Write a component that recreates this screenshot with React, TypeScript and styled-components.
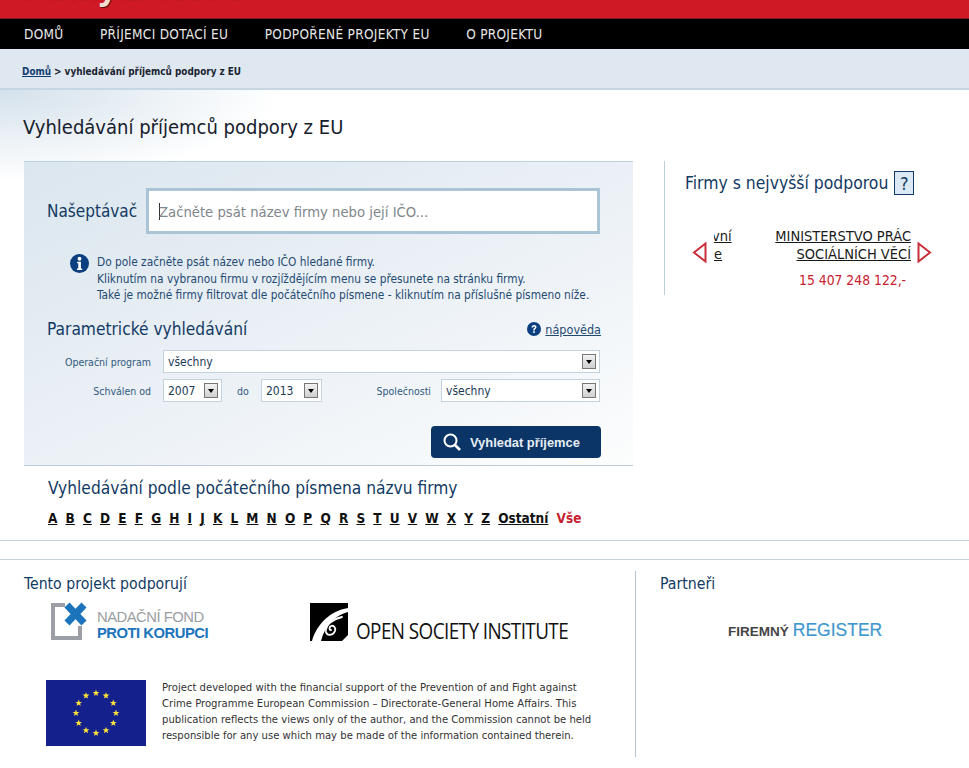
import { createGlobalStyle, styled } from 'styled-components'

const GlobalStyle = createGlobalStyle`
  html, body { margin: 0; padding: 0; background: #fff; }
  body { font-family: 'DejaVu Sans Condensed', 'DejaVu Sans', sans-serif; font-stretch: condensed; color: #0f2f55; overflow: hidden; }
  * { box-sizing: border-box; }
`

const Page = styled.div`
  width: 969px;
  height: 768px;
  overflow: hidden;
`

const Brand = styled.div`
  height: 19px;
  background: #cf1a26;
  border-bottom: 1px solid #7d1a20;
  overflow: hidden;
  padding-left: 24px;
`

const BrandName = styled.div`
  margin-top: -29px;
  font: bold 32px/32px 'Noto Sans', sans-serif;
  letter-spacing: 0.5px;
  color: #f1dcd2;
  text-shadow: 1px 1px 1px #4b1015;
`

const Nav = styled.nav`
  height: 30px;
  background: #000;
  display: flex;
  align-items: center;
  padding-left: 24px;
  gap: 36.5px;
`

const NavItem = styled.a`
  font-size: 13.5px;
  letter-spacing: 0.3px;
  color: #e8e8e8;
`

const Crumbs = styled.div`
  height: 41px;
  background: #dfe8f0;
  border-bottom: 2px solid #c6d6e2;
  display: flex;
  align-items: center;
  padding: 6px 0 0 22px;
  font-size: 9.9px;
  font-weight: 700;
  color: #1a2430;
`

const CrumbLink = styled.a`
  color: #0f3d70;
  text-decoration: underline;
  margin-right: 3px;
`

const Main = styled.main`
  height: 451px;
  padding-left: 24px;
  background: radial-gradient(ellipse 280px 90px at 0 0, #d4e1eb 0%, #fff 100%) no-repeat;
  border-bottom: 1px solid #c3d2dc;
`

const PageTitle = styled.h1`
  margin: 0 0 0 -1px;
  padding-top: 22px;
  height: 71px;
  font-size: 20px;
  line-height: 30px;
  font-weight: 400;
  color: #16202c;
`

const Columns = styled.div`
  display: flex;
`

const SearchColumn = styled.section`
  width: 609px;
`

const SearchPanel = styled.div`
  height: 305px;
  border-top: 1px solid #bcd2e0;
  border-bottom: 1px solid #bccbd5;
  background: linear-gradient(155deg, #dbe6ee 0%, #edf2f7 58%, #fcfdfd 100%);
  padding: 26px 32px 0 23px;
`

const SuggestRow = styled.div`
  display: flex;
  align-items: center;
`

const SuggestLabel = styled.label`
  width: 99px;
  font-size: 17px;
  color: #123a63;
`

const SuggestInput = styled.div`
  width: 454px;
  height: 46px;
  background: #fff;
  border: 3px solid #aac4d6;
  display: flex;
  align-items: center;
  padding-left: 10px;
  font-size: 14.7px;
  color: #80868c;
`

const Caret = styled.span`
  width: 1px;
  height: 17px;
  background: #333;
  margin-right: -1px;
`

const Help = styled.div`
  display: flex;
  gap: 8px;
  margin: 20px 0 0 23px;
  font-size: 11.8px;
  line-height: 16.5px;
  color: #1f4a72;
  white-space: nowrap;
`

const ParamHead = styled.div`
  display: flex;
  justify-content: space-between;
  align-items: center;
  margin-top: 13.5px;
  height: 24px;
`

const ParamTitle = styled.h2`
  margin: 0;
  font-size: 17.2px;
  font-weight: 400;
  color: #123a63;
`

const HelpLink = styled.a`
  display: flex;
  align-items: center;
  gap: 4px;
  font-size: 12.5px;
  color: #1f4a72;
  text-decoration: underline;
`

const FormRow = styled.div<{ $first?: boolean }>`
  display: flex;
  align-items: center;
  height: 23px;
  margin-top: ${(p) => (p.$first ? 9 : 6)}px;
  font-size: 10.5px;
  color: #335a7d;
`

const FieldLabel = styled.span<{ $w: number; $l?: number; $r?: number }>`
  width: ${(p) => p.$w}px;
  margin-left: ${(p) => p.$l ?? 0}px;
  margin-right: ${(p) => p.$r ?? 12}px;
  text-align: right;
  white-space: nowrap;
`

const Select = styled.div<{ $w: number }>`
  width: ${(p) => p.$w}px;
  height: 23px;
  background: #fff;
  border: 1px solid #c4d3dd;
  display: flex;
  align-items: center;
  justify-content: space-between;
  padding: 0 3px 0 4px;
  font-size: 12px;
  color: #1c3a55;
`

const SelectArrow = styled.span`
  width: 14px;
  height: 15px;
  background: linear-gradient(#f2f2f2, #cfcfcf);
  border: 1px solid #777;
  display: flex;
  align-items: center;
  justify-content: center;
  &::after {
    content: '';
    border-left: 3px solid transparent;
    border-right: 3px solid transparent;
    border-top: 4px solid #000;
  }
`

const Actions = styled.div`
  display: flex;
  justify-content: flex-end;
  margin-top: 24px;
`

const SearchButton = styled.button`
  width: 170px;
  height: 32px;
  border: 0;
  border-radius: 4px;
  background: #0b3567;
  color: #e6edf4;
  display: flex;
  align-items: center;
  padding: 0 0 0 11px;
  gap: 8px;
  font: 700 12.9px 'Liberation Sans', Arial, sans-serif;
`

const AlphaTitle = styled.h2`
  margin: 10px 0 0 24px;
  font-size: 17.2px;
  line-height: 24px;
  font-weight: 400;
  color: #123a63;
`

const Letters = styled.div`
  margin: 10px 0 0 24px;
  display: flex;
  font-size: 13.5px;
  line-height: 16px;
  font-weight: 700;
  gap: 8.15px;
`

const Letter = styled.a<{ $active?: boolean }>`
  color: ${(p) => (p.$active ? '#c8202f' : '#111')};
  text-decoration: ${(p) => (p.$active ? 'none' : 'underline')};
`

const Aside = styled.aside`
  margin-left: 31px;
  width: 304px;
  height: 134px;
  border-left: 1px solid #bccfdc;
  padding: 10px 0 0 20px;
`

const AsideTitle = styled.h2`
  margin: 0;
  display: flex;
  align-items: center;
  gap: 6px;
  font-size: 17.4px;
  font-weight: 400;
  color: #123a63;
`

const HelpBox = styled.span`
  width: 20px;
  height: 24px;
  border: 1px solid #123a63;
  background: #dbe9f4;
  display: flex;
  align-items: center;
  justify-content: center;
  font-size: 18px;
`

const Carousel = styled.div`
  margin: 32px 0 0 7px;
  display: flex;
  align-items: flex-end;
  height: 36px;
`

const Slides = styled.div`
  width: 197px;
  margin: 0 6px 0 7px;
  overflow: hidden;
  display: flex;
  justify-content: space-between;
  font-size: 14.5px;
  line-height: 18px;
  color: #1a1a1a;
  white-space: nowrap;
`

const SlideLink = styled.a`
  text-decoration: underline;
`

const ClippedSlide = styled(SlideLink)`
  text-indent: -2px;
`

const SlideLinkRight = styled(SlideLink)`
  text-align: right;
`

const Amount = styled.div`
  margin: 9px 0 0 114px;
  font-size: 13.8px;
  color: #c8202f;
`

const Footer = styled.footer`
  margin-top: 18px;
  border-top: 1px solid #c3d2dc;
  display: flex;
  padding: 11px 0 0 24px;
`

const Supporters = styled.div`
  width: 611px;
`

const FooterTitle = styled.h3`
  margin: 1px 0 0;
  font-size: 15.7px;
  line-height: 24px;
  font-weight: 400;
  color: #123a63;
`

const Logos = styled.div`
  display: flex;
  margin: 6px 0 0 27px;
  height: 78px;
`

const AntiCorruption = styled.div`
  display: flex;
  gap: 9px;
  width: 259px;
`

const FundText = styled.div`
  padding-top: 7px;
  font: 400 14.8px/16px 'Liberation Sans', sans-serif;
  color: #9a9ea3;
  letter-spacing: -0.5px;
`

const FundStrong = styled.div`
  font-weight: 700;
  color: #1c75bc;
`

const OsiLogo = styled.div`
  display: flex;
  align-items: flex-end;
  gap: 8px;
  height: 39px;
`

const OsiName = styled.span`
  font: 400 22.5px/20px 'Open Sans', sans-serif;
  color: #111;
  letter-spacing: -0.7px;
  white-space: nowrap;
  transform: scaleX(0.84);
  transform-origin: left bottom;
`

const EuRow = styled.div`
  display: flex;
  gap: 16px;
  margin-left: 22px;
`

const EuText = styled.p`
  margin: 0;
  font-size: 11.2px;
  line-height: 16px;
  color: #333;
  white-space: nowrap;
`

const Partners = styled.div`
  width: 309px;
  height: 186px;
  border-left: 1px solid #b5c4cf;
  padding-left: 24px;
`

const PartnerLogo = styled.div`
  margin: 24px 0 0 68px;
  display: flex;
  align-items: baseline;
  gap: 4px;
  font: 700 13.5px 'Liberation Sans', sans-serif;
  color: #444;
`

const PartnerStrong = styled.span`
  font-size: 17.5px;
  font-weight: 400;
  -webkit-text-stroke: 0.2px #3f97cf;
  color: #3f97cf;
`

const Glyph = styled.svg`
  flex: none;
`

const letters = 'ABCDEFGHIJKLMNOPQRSTUVWXYZ'.split('')

const InfoIcon = () => (
  <Glyph width="19" height="19" viewBox="0 0 20 20">
    <circle cx="10" cy="10" r="10" fill="#0b3f80" />
    <circle cx="10" cy="5" r="2" fill="#fff" />
    <path d="M7.5 8.2h4v7h1.3v1.6H7.3v-1.6h1.4V9.8H7.5z" fill="#fff" />
  </Glyph>
)

const QuestionIcon = () => (
  <Glyph width="14" height="14" viewBox="0 0 14 14">
    <circle cx="7" cy="7" r="7" fill="#0b3f80" />
    <path d="M4.6 5.4C4.7 3.8 5.8 3 7.1 3c1.4 0 2.4.9 2.4 2.1 0 1.9-1.8 1.8-1.8 3.3H6.2c0-2.3 1.7-2.2 1.7-3.2 0-.5-.4-.8-.9-.8-.6 0-.9.4-1 1z" fill="#fff" />
    <rect x="6.2" y="9.2" width="1.6" height="1.7" fill="#fff" />
  </Glyph>
)

const SearchGlyph = () => (
  <Glyph width="20" height="20" viewBox="0 0 20 20" fill="none" stroke="#fff">
    <circle cx="8.5" cy="8.5" r="6" strokeWidth="2" />
    <path d="M13 13l5 5" strokeWidth="2.6" />
  </Glyph>
)

const Triangle = ({ flip }: { flip?: boolean }) => (
  <Glyph width="15" height="21" viewBox="0 0 15 21" fill="#fff" stroke="#c8303c" strokeWidth="2">
    <path d={flip ? 'M1.5 1.5L13 10.5 1.5 19.5z' : 'M13.5 1.5L2 10.5 13.5 19.5z'} />
  </Glyph>
)

const FundMark = () => (
  <Glyph width="37" height="38" viewBox="0 0 37 38">
    <path d="M0 1h14v4H4v29h23V24h4v14H0z" fill="#9c9fa6" />
    <path d="M16 3l17 18M33 3L16 21" stroke="#1c75bc" strokeWidth="7" fill="none" />
  </Glyph>
)

const OsiMark = () => (
  <Glyph width="38" height="38" viewBox="0 0 38 38">
    <rect width="38" height="38" fill="#000" />
    <path d="M2 38C7 21 20 8 38 5v4C26 12 15 22 11 38z" fill="#fff" />
    <path d="M32 14C23 16 15 22 16 29c1 4 7 4 9-1 1-3-1-6-4-5-2 1-2 4 0 4" fill="none" stroke="#fff" strokeWidth="1.8" strokeLinecap="round" />
    <path d="M32 38L38 32v6z" fill="#fff" />
  </Glyph>
)

const stars = Array.from({ length: 12 }, (_, i) => {
  const a = (i * Math.PI) / 6
  return { x: 50 + 20 * Math.sin(a), y: 33 - 20 * Math.cos(a) }
})

const EuFlag = () => (
  <Glyph width="100" height="66" viewBox="0 0 100 66">
    <rect width="100" height="66" fill="#14208c" />
    {stars.map((s, i) => (
      <polygon
        key={i}
        transform={`translate(${s.x} ${s.y})`}
        fill="#ffe53a"
        points="0,-3.5 0.9,-1.1 3.4,-1.1 1.4,0.5 2.1,2.9 0,1.5 -2.1,2.9 -1.4,0.5 -3.4,-1.1 -0.9,-1.1"
      />
    ))}
  </Glyph>
)

export default function App() {
  return (
    <Page>
      <GlobalStyle />
      <Brand>
        <BrandName>Firmy.Dotace</BrandName>
      </Brand>
      <Nav>
        <NavItem>DOMŮ</NavItem>
        <NavItem>PŘÍJEMCI DOTACÍ EU</NavItem>
        <NavItem>PODPOŘENÉ PROJEKTY EU</NavItem>
        <NavItem>O PROJEKTU</NavItem>
      </Nav>
      <Crumbs>
        <CrumbLink>Domů</CrumbLink> &gt; vyhledávání příjemců podpory z EU
      </Crumbs>
      <Main>
        <PageTitle>Vyhledávání příjemců podpory z EU</PageTitle>
        <Columns>
          <SearchColumn>
            <SearchPanel>
              <SuggestRow>
                <SuggestLabel>Našeptávač</SuggestLabel>
                <SuggestInput>
                  <Caret />
                  Začněte psát název firmy nebo její IČO...
                </SuggestInput>
              </SuggestRow>
              <Help>
                <InfoIcon />
                <div>
                  Do pole začněte psát název nebo IČO hledané firmy.
                  <br />
                  Kliknutím na vybranou firmu v rozjíždějícím menu se přesunete na stránku firmy.
                  <br />
                  Také je možné firmy filtrovat dle počátečního písmene - kliknutím na příslušné písmeno níže.
                </div>
              </Help>
              <ParamHead>
                <ParamTitle>Parametrické vyhledávání</ParamTitle>
                <HelpLink>
                  <QuestionIcon />
                  nápověda
                </HelpLink>
              </ParamHead>
              <FormRow $first>
                <FieldLabel $w={104}>Operační program</FieldLabel>
                <Select $w={437}>
                  všechny
                  <SelectArrow />
                </Select>
              </FormRow>
              <FormRow>
                <FieldLabel $w={104}>Schválen od</FieldLabel>
                <Select $w={59}>
                  2007
                  <SelectArrow />
                </Select>
                <FieldLabel $w={11} $l={15} $r={13}>do</FieldLabel>
                <Select $w={61}>
                  2013
                  <SelectArrow />
                </Select>
                <FieldLabel $w={56} $l={53} $r={10}>Společnosti</FieldLabel>
                <Select $w={159}>
                  všechny
                  <SelectArrow />
                </Select>
              </FormRow>
              <Actions>
                <SearchButton>
                  <SearchGlyph />
                  Vyhledat příjemce
                </SearchButton>
              </Actions>
            </SearchPanel>
            <AlphaTitle>Vyhledávání podle počátečního písmena názvu firmy</AlphaTitle>
            <Letters>
              {letters.map((l) => (
                <Letter key={l}>{l}</Letter>
              ))}
              <Letter>Ostatní</Letter>
              <Letter $active>Vše</Letter>
            </Letters>
          </SearchColumn>
          <Aside>
            <AsideTitle>
              Firmy s nejvyšší podporou
              <HelpBox>?</HelpBox>
            </AsideTitle>
            <Carousel>
              <Triangle />
              <Slides>
                <ClippedSlide>
                  vní
                  <br />e
                </ClippedSlide>
                <SlideLinkRight>
                  MINISTERSTVO PRÁC
                  <br />
                  SOCIÁLNÍCH VĚCÍ
                </SlideLinkRight>
              </Slides>
              <Triangle flip />
            </Carousel>
            <Amount>15 407 248 122,-</Amount>
          </Aside>
        </Columns>
      </Main>
      <Footer>
        <Supporters>
          <FooterTitle>Tento projekt podporují</FooterTitle>
          <Logos>
            <AntiCorruption>
              <FundMark />
              <FundText>
                NADAČNÍ FOND
                <FundStrong>PROTI KORUPCI</FundStrong>
              </FundText>
            </AntiCorruption>
            <OsiLogo>
              <OsiMark />
              <OsiName>OPEN SOCIETY INSTITUTE</OsiName>
            </OsiLogo>
          </Logos>
          <EuRow>
            <EuFlag />
            <EuText>
              Project developed with the financial support of the Prevention of and Fight against
              <br />
              Crime Programme European Commission – Directorate-General Home Affairs. This
              <br />
              publication reflects the views only of the author, and the Commission cannot be held
              <br />
              responsible for any use which may be made of the information contained therein.
            </EuText>
          </EuRow>
        </Supporters>
        <Partners>
          <FooterTitle>Partneři</FooterTitle>
          <PartnerLogo>
            FIREMNÝ <PartnerStrong>REGISTER</PartnerStrong>
          </PartnerLogo>
        </Partners>
      </Footer>
    </Page>
  )
}
